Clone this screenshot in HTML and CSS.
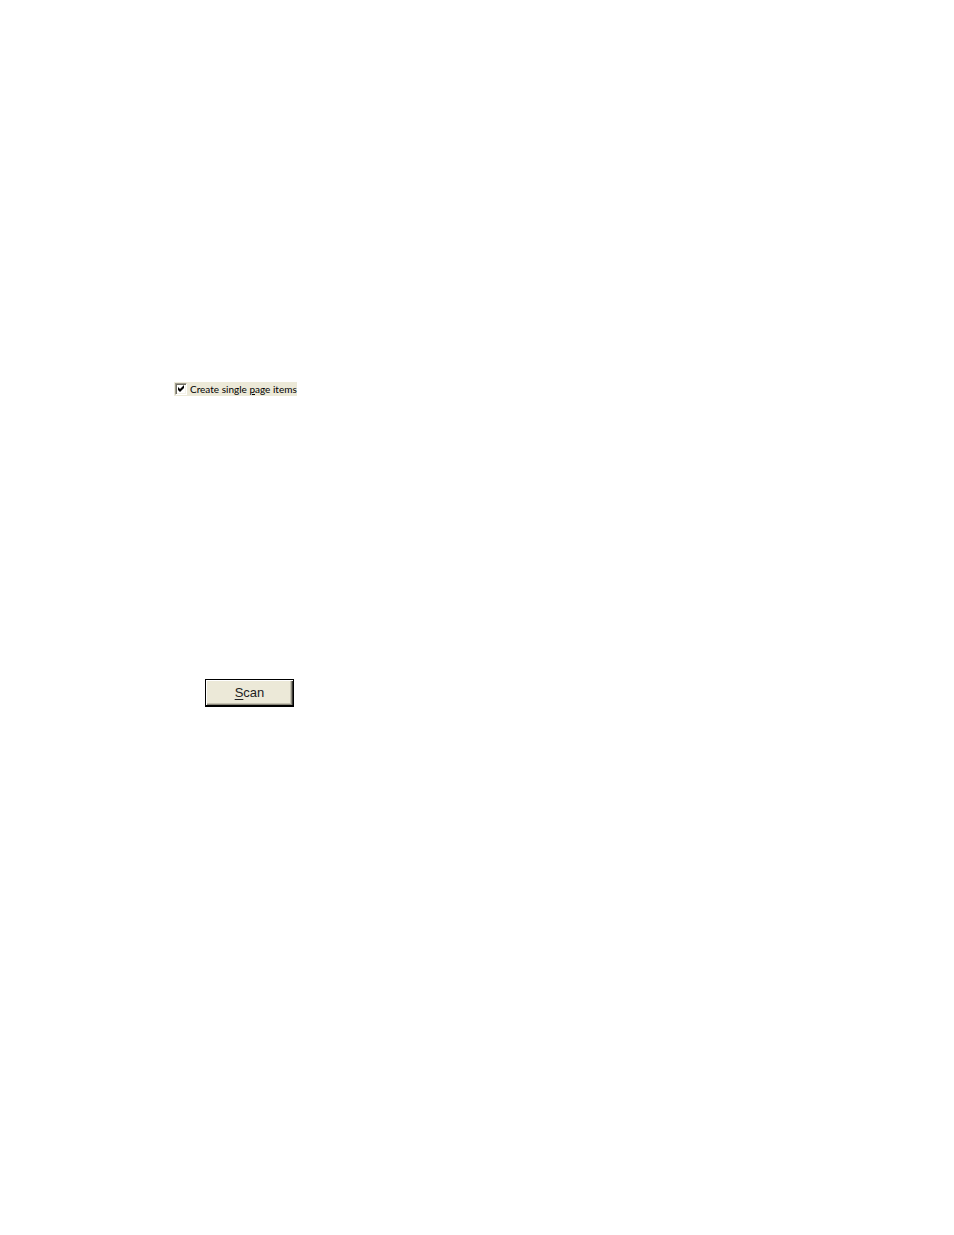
FILE: index.html
```html
<!DOCTYPE html>
<html lang="en">
<head>
<meta charset="utf-8">
<title>Scan</title>
<link rel="stylesheet" href="styles.css">
</head>
<body>
<main class="page">
  <form class="controls">
    <label class="option" for="single-page">
      <span class="check">
        <input class="check-input" type="checkbox" id="single-page" checked>
        <svg class="check-mark" viewBox="0 0 12 12" aria-hidden="true"><path d="M3 4L5 6L9 2V5L5 9L3 7Z"/></svg>
      </span>
      <span class="option-text">Create single <u>p</u>age items</span>
    </label>
    <button class="button" type="button"><span><u>S</u>can</span></button>
  </form>
</main>
</body>
</html>
```
FILE: styles.css
```css
body {
  margin: 0;
  background: #fff;
  color: #000;
  font-family: "Liberation Sans", Arial, sans-serif;
}

.page {
  padding: 382px 24px 24px 174px;
}

.controls {
  display: flex;
  flex-direction: column;
  align-items: flex-start;
  gap: 283px;
  max-width: 120px;
}

.option {
  display: flex;
  align-items: center;
  gap: 3px;
  padding-left: 1px;
  background: #ece9d8;
  font-family: Lato, sans-serif;
  font-size: 10px;
  line-height: 14px;
  white-space: nowrap;
}

.check {
  display: grid;
}

.check-input,
.check-mark {
  grid-area: 1 / 1;
  width: 12px;
  height: 12px;
}

.check-input {
  appearance: none;
  box-sizing: border-box;
  margin: 0;
  border: 1px solid;
  border-color: #a09d90 #fff #fff #a09d90;
  background: #fff;
  box-shadow: inset 1px 1px #716f64, inset -1px -1px #f4f2e8;
}

.check-mark {
  visibility: hidden;
  pointer-events: none;
}

.check-input:checked + .check-mark {
  visibility: visible;
}

.button {
  align-self: flex-end;
  min-width: 89px;
  margin: 0;
  padding: 5px 16px 4px;
  border: solid #000;
  border-width: 1px 1px 2px;
  border-radius: 0;
  background: #ece9d8;
  box-shadow: inset 1px 1px #fff, inset -1px 0 #3a3934, inset -2px -1px #8a877a, inset -3px -2px #c5c2b2;
  color: #222;
  font-family: inherit;
  font-size: 13px;
  line-height: 16px;
}

.button u {
  text-underline-offset: 2px;
}
```
